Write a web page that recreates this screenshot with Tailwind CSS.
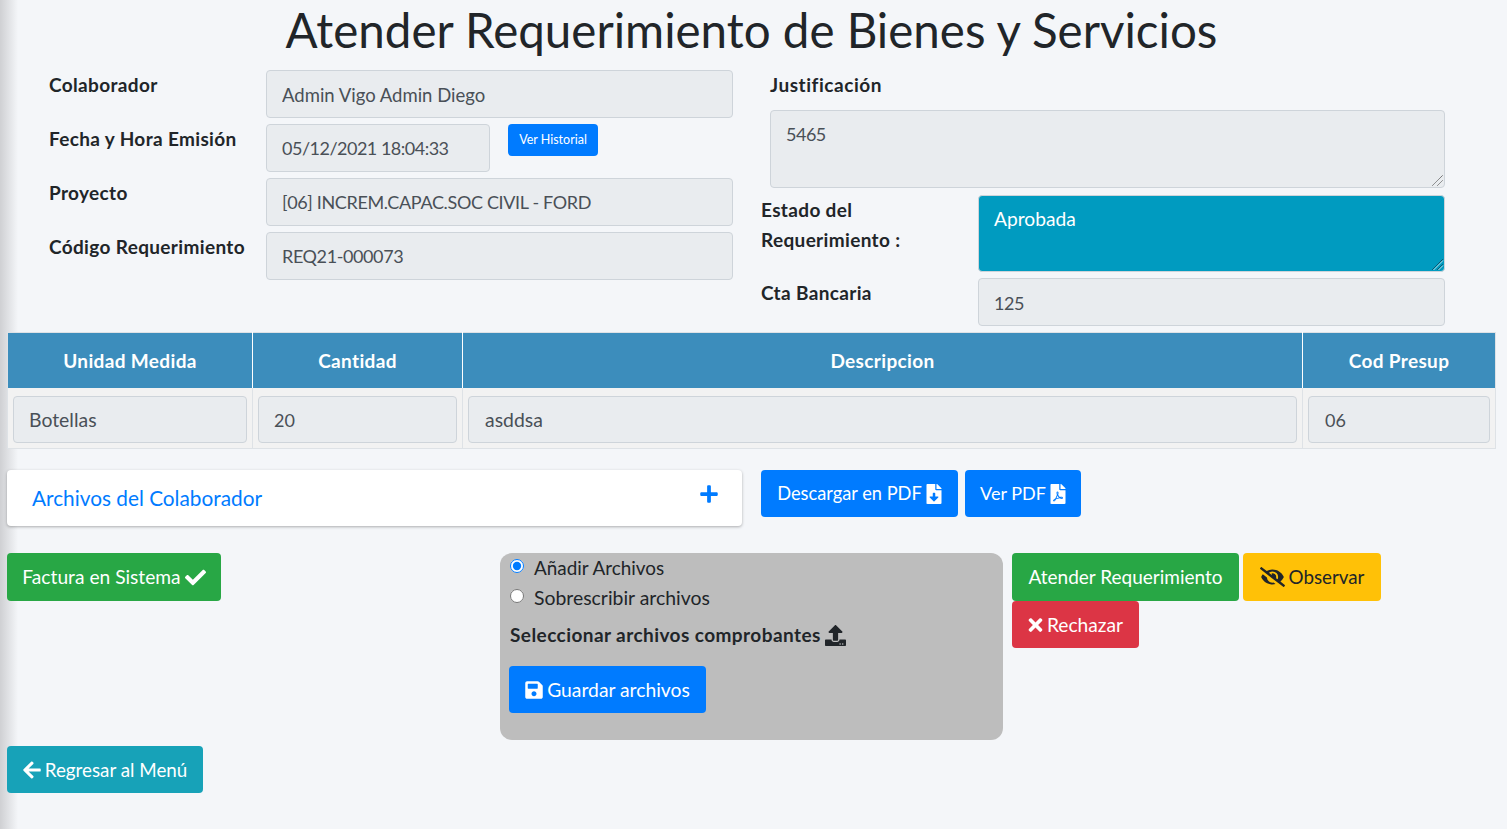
<!DOCTYPE html>
<html lang="en">
<head>
    <meta charset="UTF-8">
    <meta name="viewport" content="width=device-width, initial-scale=1.0">
    <title>Atender Requerimiento de Bienes y Servicios</title>
    <script src="https://cdn.jsdelivr.net/npm/@tailwindcss/browser@4"></script>
</head>
<body class="bg-[#f4f6f9] min-h-screen overflow-hidden text-[#212529] text-[18px] font-['Lato','Liberation_Sans',sans-serif]">

    <!-- sidebar shadow -->
    <div class="absolute left-0 top-0 h-full w-[18px] bg-gradient-to-r from-[#cfd0d3] to-[#f4f6f9]"></div>

    <div class="relative w-[1496px] pl-[7px]">
        <h1 class="h-[70px] text-center text-[47.5px] leading-[60px]">Atender Requerimiento de Bienes y Servicios</h1>

        <div class="flex h-[262px]">
            <!-- left form -->
            <div class="w-[754px] pl-[42px] flex flex-col gap-[6.5px]">
                <div class="flex">
                    <label class="w-[217px] font-bold text-[19px] tracking-[0.35px] leading-[30px]">Colaborador</label>
                    <input readonly value="Admin Vigo Admin Diego" class="w-[467px] h-[47.5px] px-[15px] pt-[2px] rounded border border-[#ced4da] bg-[#e9ecef] text-[#495057] text-[18.5px]">
                </div>
                <div class="flex">
                    <label class="w-[217px] font-bold text-[19px] tracking-[0.35px] leading-[30px]">Fecha y Hora Emisión</label>
                    <input readonly value="05/12/2021 18:04:33" class="w-[224px] h-[47.5px] px-[15px] rounded border border-[#ced4da] bg-[#e9ecef] text-[#495057] tracking-[-0.5px]">
                    <button class="ml-[18px] w-[90px] h-[32px] rounded bg-[#007bff] text-white text-[12.5px]">Ver Historial</button>
                </div>
                <div class="flex">
                    <label class="w-[217px] font-bold text-[19px] tracking-[0.35px] leading-[30px]">Proyecto</label>
                    <input readonly value="[06] INCREM.CAPAC.SOC CIVIL - FORD" class="w-[467px] h-[47.5px] px-[15px] rounded border border-[#ced4da] bg-[#e9ecef] text-[#495057] tracking-[-0.35px]">
                </div>
                <div class="flex">
                    <label class="w-[217px] font-bold text-[19px] tracking-[0.35px] leading-[30px]">Código Requerimiento</label>
                    <input readonly value="REQ21-000073" class="w-[467px] h-[47.5px] px-[15px] rounded border border-[#ced4da] bg-[#e9ecef] text-[#495057] tracking-[-0.4px]">
                </div>
            </div>

            <!-- right form -->
            <div class="flex-1">
                <label class="block ml-[9px] h-[40px] font-bold text-[19px] tracking-[0.55px] leading-[30px]">Justificación</label>
                <div class="relative ml-[9px] w-[675px] h-[78px]">
                    <textarea readonly class="block w-full h-full resize-none px-[15px] pt-[10px] rounded border border-[#ced4da] bg-[#e9ecef] text-[#495057] tracking-[-0.5px]">5465</textarea>
                    <svg class="absolute right-[1px] bottom-[1px] w-[12px] h-[12px]" viewBox="0 0 12 12"><path d="M0.5 10.5L10.5 0.5M5.5 10.5L10.5 5.5" stroke="#444" stroke-dasharray="1 0.5" fill="none"/></svg>
                </div>
                <div class="flex mt-[7px]">
                    <label class="w-[217px] font-bold text-[19px] tracking-[0.35px] leading-[30px]">Estado del<br>Requerimiento :</label>
                    <div class="relative w-[467px] h-[77px]">
                        <textarea readonly class="block w-full h-full resize-none px-[15px] py-[9px] rounded border border-[#ced4da] bg-[#009bc0] text-white text-[19.2px]">Aprobada</textarea>
                        <svg class="absolute right-[1px] bottom-[1px] w-[12px] h-[12px]" viewBox="0 0 12 12"><path d="M0.5 10.5L10.5 0.5M5.5 10.5L10.5 5.5" stroke="#123" stroke-dasharray="1 0.5" fill="none"/><path d="M1.5 11L11 1.5M6.5 11L11 6.5" stroke="#fff" stroke-width="0.7" fill="none"/></svg>
                    </div>
                </div>
                <div class="flex mt-[6px]">
                    <label class="w-[217px] font-bold text-[19px] tracking-[0.35px] leading-[30px]">Cta Bancaria</label>
                    <input readonly value="125" class="w-[467px] h-[48px] px-[15px] pt-[2px] rounded border border-[#ced4da] bg-[#e9ecef] text-[#495057] tracking-[-0.5px]">
                </div>
            </div>
        </div>

        <table class="w-[1488px] table-fixed border-collapse border border-[#dee2e6]">
            <thead>
                <tr class="h-[55px] bg-[#3c8dbc] text-white font-bold text-[19px] tracking-[0.35px]">
                    <th class="w-[245px] pt-[2px] border-r border-white">Unidad Medida</th>
                    <th class="w-[210px] pt-[2px] border-r border-white">Cantidad</th>
                    <th class="w-[840px] pt-[2px] border-r border-white">Descripcion</th>
                    <th class="w-[193px] pt-[2px]">Cod Presup</th>
                </tr>
            </thead>
            <tbody>
                <tr class="h-[61px] bg-[#f2f2f2]">
                    <td class="px-[5px] pt-[8px] pb-[5px] border-r border-[#dee2e6]"><input readonly value="Botellas" class="w-full h-[47px] px-[15px] rounded border border-[#ced4da] bg-[#e9ecef] text-[#495057] text-[19.4px]"></td>
                    <td class="px-[5px] pt-[8px] pb-[5px] border-r border-[#dee2e6]"><input readonly value="20" class="w-full h-[47px] px-[15px] pt-[2px] rounded border border-[#ced4da] bg-[#e9ecef] text-[#495057]"></td>
                    <td class="px-[5px] pt-[8px] pb-[5px] border-r border-[#dee2e6]"><input readonly value="asddsa" class="w-full h-[47px] px-[16px] rounded border border-[#ced4da] bg-[#e9ecef] text-[#495057] text-[19.4px]"></td>
                    <td class="px-[5px] pt-[8px] pb-[5px]"><input readonly value="06" class="w-full h-[47px] px-[16px] pt-[2px] rounded border border-[#ced4da] bg-[#e9ecef] text-[#495057]"></td>
                </tr>
            </tbody>
        </table>

        <div class="flex mt-[21px] items-start">
            <div class="w-[735px] h-[56px] pl-[25px] pr-[24px] flex items-center justify-between rounded bg-white shadow-[0_1px_3px_rgba(0,0,0,0.3)] text-[#007bff] text-[20.8px]">
                <span>Archivos del Colaborador</span>
                <svg class="w-[18px] h-[20px] mb-[8px] fill-[#007bff]" viewBox="0 0 448 512"><path d="M416 208H272V64c0-17.67-14.33-32-32-32h-32c-17.67 0-32 14.33-32 32v144H32c-17.67 0-32 14.33-32 32v32c0 17.67 14.33 32 32 32h144v144c0 17.67 14.33 32 32 32h32c17.67 0 32-14.33 32-32V304h144c17.67 0 32-14.33 32-32v-32c0-17.67-14.33-32-32-32z"/></svg>
            </div>
            <button class="ml-[19px] w-[197px] h-[47px] flex items-center justify-center gap-[4px] rounded bg-[#007bff] text-white text-[18.25px]">Descargar en PDF
                <svg class="w-[16px] h-[20px] fill-white" viewBox="0 0 384 512"><path d="M224 136V0H24C10.7 0 0 10.7 0 24v464c0 13.3 10.7 24 24 24h336c13.3 0 24-10.7 24-24V160H248c-13.2 0-24-10.8-24-24zm76.45 211.36l-96.42 95.7c-6.65 6.61-17.39 6.61-24.04 0l-96.42-95.7C73.42 337.29 80.54 320 94.82 320H160v-80c0-8.84 7.16-16 16-16h32c8.84 0 16 7.16 16 16v80h65.18c14.28 0 21.4 17.29 11.27 27.36zM377 105L279.1 7c-4.5-4.5-10.6-7-17-7H256v128h128v-6.1c0-6.3-2.5-12.4-7-16.9z"/></svg>
            </button>
            <button class="ml-[7px] w-[116px] h-[47px] flex items-center justify-center gap-[4px] rounded bg-[#007bff] text-white">Ver PDF
                <svg class="w-[16px] h-[20px] fill-white" viewBox="0 0 384 512"><path d="M181.9 256.1c-5-16-4.9-46.9-2-46.9 8.4 0 7.6 36.9 2 46.9zm-1.7 47.2c-7.7 20.2-17.3 43.3-28.4 62.7 18.3-7 39-17.2 62.9-21.9-12.7-9.6-24.9-23.4-34.5-40.8zM86.1 428.1c0 .8 13.2-5.4 34.9-40.2-6.7 6.3-29.1 24.5-34.9 40.2zM248 160h136v328c0 13.3-10.7 24-24 24H24c-13.3 0-24-10.7-24-24V24C0 10.7 10.7 0 24 0h200v136c0 13.2 10.8 24 24 24zm-8 171.8c-20-12.2-33.3-29-42.7-53.8 4.5-18.5 11.6-46.6 6.2-64.2-4.7-29.4-42.4-26.5-47.8-6.8-5 18.3-.4 44.1 8.1 77-11.6 27.6-28.7 64.6-40.8 85.8-.1 0-.1.1-.2.1-27.1 13.9-73.6 44.5-54.5 68 5.6 6.9 16 10 21.5 10 17.9 0 35.7-18 61.1-61.8 25.8-8.5 54.1-19.1 79-23.2 21.7 11.8 47.1 19.5 64 19.5 29.2 0 31.2-32 19.7-43.4-13.9-13.6-54.3-9.7-73.6-7.2zM377 105L279 7c-4.5-4.5-10.6-7-17-7h-6v128h128v-6.1c0-6.3-2.5-12.4-7-16.9zm-74.1 255.3c4.1-2.7-2.5-11.9-42.8-9 37.1 15.8 42.8 9 42.8 9z"/></svg>
            </button>
        </div>

        <div class="flex mt-[27px] items-start">
            <div class="w-[493px]">
                <button class="w-[214px] h-[48px] flex items-center justify-center gap-[4px] rounded bg-[#28a745] text-white text-[19.2px]">Factura en Sistema
                    <svg class="w-[21px] h-[21px] fill-white" viewBox="0 0 512 512"><path d="M173.898 439.404l-166.4-166.4c-9.997-9.997-9.997-26.206 0-36.204l36.203-36.204c9.997-9.998 26.207-9.998 36.204 0L192 312.69 432.095 72.596c9.997-9.997 26.207-9.997 36.204 0l36.203 36.204c9.997 9.997 9.997 26.206 0 36.204l-294.4 294.401c-9.998 9.997-26.207 9.997-36.204-.001z"/></svg>
                </button>
            </div>

            <div class="w-[503px] h-[187px] pl-[10px] rounded-[12px] bg-[#bdbdbd]">
                <label class="flex items-center h-[30px]"><input type="radio" name="modo" checked class="w-[14px] h-[14px] mb-[4px] accent-[#007bff]"><span class="ml-[10px] text-[18.9px]">Añadir Archivos</span></label>
                <label class="flex items-center h-[30px]"><input type="radio" name="modo" class="w-[14px] h-[14px] mb-[4px] accent-[#007bff]"><span class="ml-[10px] text-[19.4px]">Sobrescribir archivos</span></label>
                <div class="flex items-center gap-[4px] h-[30px] mt-[7px] font-bold text-[19px] tracking-[0.43px]">Seleccionar archivos comprobantes
                    <svg class="w-[21px] h-[21px] fill-[#212529]" viewBox="0 0 512 512"><path d="M296 384h-80c-13.3 0-24-10.7-24-24V192h-87.7c-17.8 0-26.7-21.5-14.1-34.1L242.3 5.7c7.5-7.5 19.8-7.5 27.3 0l152.2 152.2c12.6 12.6 3.7 34.1-14.1 34.1H320v168c0 13.3-10.7 24-24 24zm216-8v112c0 13.3-10.7 24-24 24H24c-13.3 0-24-10.7-24-24V376c0-13.3 10.7-24 24-24h136v8c0 30.9 25.1 56 56 56h80c30.9 0 56-25.1 56-56v-8h136c13.3 0 24 10.7 24 24zm-124 88c0-11-9-20-20-20s-20 9-20 20 9 20 20 20 20-9 20-20zm64 0c0-11-9-20-20-20s-20 9-20 20 9 20 20 20 20-9 20-20z"/></svg>
                </div>
                <button class="mt-[16px] -ml-[1px] w-[197px] h-[47px] pt-[2px] flex items-center justify-center gap-[4px] rounded bg-[#007bff] text-white text-[19.3px]">
                    <svg class="w-[18px] h-[20px] -mt-[2px] fill-white" viewBox="0 0 448 512"><path d="M433.941 129.941l-83.882-83.882A48 48 0 0 0 316.118 32H48C21.49 32 0 53.49 0 80v352c0 26.51 21.49 48 48 48h352c26.51 0 48-21.49 48-48V163.882a48 48 0 0 0-14.059-33.941zM224 416c-35.346 0-64-28.654-64-64 0-35.346 28.654-64 64-64s64 28.654 64 64c0 35.346-28.654 64-64 64zm96-304.52V212c0 6.627-5.373 12-12 12H76c-6.627 0-12-5.373-12-12V108c0-6.627 5.373-12 12-12h228.52c3.183 0 6.235 1.264 8.485 3.515l3.48 3.48A11.996 11.996 0 0 1 320 111.48z"/></svg>
                    Guardar archivos
                </button>
            </div>

            <div class="ml-[9px] w-[400px] flex flex-wrap gap-x-[4px]">
                <button class="w-[227px] h-[48px] rounded bg-[#28a745] text-white text-[19px]">Atender Requerimiento</button>
                <button class="w-[138px] h-[48px] flex items-center justify-center gap-[4px] rounded bg-[#ffc107] text-[18.8px]">
                    <svg class="w-[25px] h-[20px] fill-[#212529]" viewBox="0 0 640 512"><path d="M320 400c-75.85 0-137.25-58.71-142.9-133.11L72.2 185.82c-13.79 17.3-26.48 35.59-36.72 55.59a32.35 32.35 0 0 0 0 29.19C89.71 376.41 197.07 448 320 448c26.91 0 52.87-4 77.89-10.46L346 397.39a144.13 144.13 0 0 1-26 2.61zm313.82 58.1l-110.55-85.44a331.25 331.25 0 0 0 81.25-102.07 32.35 32.35 0 0 0 0-29.19C550.29 135.59 442.93 64 320 64a308.15 308.15 0 0 0-147.32 37.7L45.46 3.37A16 16 0 0 0 23 6.18L3.37 31.45A16 16 0 0 0 6.18 53.9l588.36 454.73a16 16 0 0 0 22.46-2.81l19.64-25.27a16 16 0 0 0-2.82-22.45zm-183.72-142l-39.3-30.38A94.75 94.75 0 0 0 416 256a94.76 94.76 0 0 0-121.31-92.21A47.65 47.65 0 0 1 304 192a46.64 46.64 0 0 1-1.54 10l-73.61-56.89A142.31 142.31 0 0 1 320 112a143.92 143.92 0 0 1 144 144c0 21.63-5.29 41.79-13.9 60.11z"/></svg>
                    Observar
                </button>
                <button class="w-[127px] h-[47px] pt-[2px] flex items-center justify-center gap-[4px] rounded bg-[#dc3545] text-white text-[19.2px]">
                    <svg class="w-[15px] h-[20px] -mt-[2px] fill-white" viewBox="0 0 352 512"><path d="M242.72 256l100.07-100.07c12.28-12.28 12.28-32.19 0-44.48l-22.24-22.24c-12.28-12.28-32.19-12.28-44.48 0L176 189.28 75.93 89.21c-12.28-12.28-32.19-12.28-44.48 0L9.21 111.45c-12.28 12.28-12.28 32.19 0 44.48L109.28 256 9.21 356.07c-12.28 12.28-12.28 32.19 0 44.48l22.24 22.24c12.28 12.28 32.2 12.28 44.48 0L176 322.72l100.07 100.07c12.28 12.28 32.2 12.28 44.48 0l22.24-22.24c12.28-12.28 12.28-32.19 0-44.48L242.72 256z"/></svg>
                    Rechazar
                </button>
            </div>
        </div>

        <button class="mt-[6px] w-[196px] h-[47px] pt-[2px] flex items-center justify-center gap-[4px] rounded bg-[#17a2b8] text-white text-[18.8px]">
            <svg class="w-[18px] h-[20px] -mt-[2px] fill-white" viewBox="0 0 448 512"><path d="M257.5 445.1l-22.2 22.2c-9.4 9.4-24.6 9.4-33.9 0L7 273c-9.4-9.4-9.4-24.6 0-33.9L201.4 44.7c9.4-9.4 24.6-9.4 33.9 0l22.2 22.2c9.5 9.5 9.3 25-.4 34.3L136.6 216H424c13.3 0 24 10.7 24 24v32c0 13.3-10.7 24-24 24H136.6l120.5 114.8c9.8 9.3 10 24.8.4 34.3z"/></svg>
            Regresar al Menú
        </button>
    </div>

</body>
</html>
